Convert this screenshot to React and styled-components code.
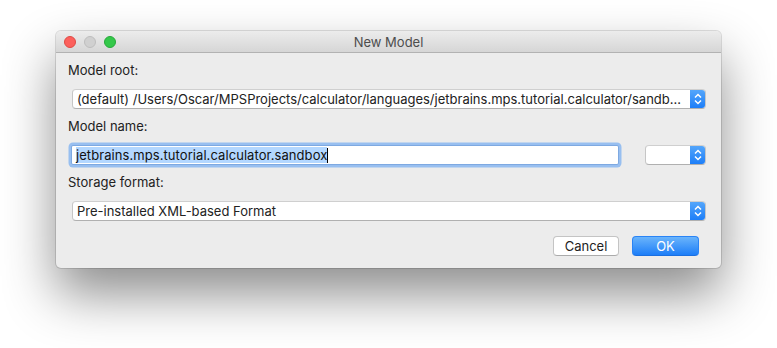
import React from "react";
import styled, { createGlobalStyle } from "styled-components";

const GlobalStyle = createGlobalStyle`
  html, body {
    margin: 0;
    padding: 0;
    background: #ffffff;
  }
  body {
    font-family: "Inter", "Liberation Sans", sans-serif;
    font-size: 13px;
    color: #222222;
  }
`;

const Page = styled.div`
  width: 777px;
  height: 348px;
  padding: 31px 56px 0;
  box-sizing: border-box;
  overflow: hidden;
`;

const Window = styled.div`
  width: 665px;
  height: 237px;
  border-radius: 5px;
  background: #ececec;
  box-shadow: 0 0 0 1px rgba(0, 0, 0, 0.12), 0 26px 52px rgba(0, 0, 0, 0.45);
  display: flex;
  flex-direction: column;
  overflow: hidden;
`;

const TitleBar = styled.div`
  height: 21px;
  flex-shrink: 0;
  display: flex;
  align-items: center;
  padding: 0 8px;
  background: linear-gradient(#ececec, #d6d6d6);
  border-bottom: 1px solid #b2b2b2;
`;

const Lights = styled.div`
  display: flex;
  gap: 8px;
`;

const Light = styled.span`
  width: 12px;
  height: 12px;
  border-radius: 50%;
  box-sizing: border-box;
  background: ${(p) => p.$fill};
  border: 0.5px solid ${(p) => p.$edge};
`;

const Title = styled.div`
  flex: 1;
  text-align: center;
  margin-right: 52px;
  color: #4d4d4d;
  font-size: 13px;
`;

const Body = styled.div`
  flex: 1;
  display: flex;
  flex-direction: column;
  padding: 9px 15px 12px 12px;
`;

const Label = styled.div`
  height: 16px;
  line-height: 16px;
  color: #222;
`;

const Row = styled.div`
  display: flex;
  align-items: center;
  gap: 26px;
  margin: 11px 0 9px 4px;
`;

const Combo = styled.div`
  flex: ${(p) => (p.$width ? "none" : "1")};
  width: ${(p) => (p.$width ? `${p.$width}px` : "auto")};
  min-width: 0;
  height: 20px;
  display: flex;
  box-sizing: border-box;
  border: 1px solid #c6c6c6;
  border-top-color: #cfcfcf;
  border-bottom-color: #b0b0b0;
  border-radius: 4px;
  background: #fff;
  overflow: hidden;
`;

const ComboText = styled.div`
  flex: 1;
  min-width: 0;
  padding-left: 4px;
  line-height: 18px;
  white-space: nowrap;
  overflow: hidden;
  color: #222;
`;

const ComboArrow = styled.div`
  width: 16px;
  flex-shrink: 0;
  margin: -1px -1px -1px 0;
  background: linear-gradient(#57a8fb, #1a7cf8);
  display: flex;
  align-items: center;
  justify-content: center;
`;

const Field = styled.div`
  flex: 1;
  height: 20px;
  box-sizing: border-box;
  margin-left: -1px;
  background: #fff;
  border: 1px solid #7ea9e1;
  border-radius: 2px;
  box-shadow: 0 0 0 2.5px #98bff0;
  display: flex;
  align-items: center;
  padding-left: 4px;
`;

const Selected = styled.span`
  background: #b3d7ff;
  line-height: 16px;
  color: #111;
  letter-spacing: 0.07px;
`;

const Caret = styled.span`
  width: 1px;
  height: 15px;
  background: #000;
`;

const Buttons = styled.div`
  display: flex;
  justify-content: flex-end;
  gap: 13px;
  margin-top: 6px;
  padding-right: 7px;
`;

const Button = styled.div`
  width: ${(p) => p.$width}px;
  height: 20px;
  box-sizing: border-box;
  border-radius: 4px;
  display: flex;
  align-items: center;
  justify-content: center;
  color: ${(p) => (p.$primary ? "#ffffff" : "#222222")};
  background: ${(p) =>
    p.$primary ? "linear-gradient(#6ab4fb, #1d7ef8)" : "#ffffff"};
  border: 1px solid ${(p) => (p.$primary ? "#2a84f6" : "#c4c4c4")};
  border-bottom-color: ${(p) => (p.$primary ? "#1a6fe0" : "#ababab")};
`;

const Chevrons = () => (
  <svg width="16" height="18" viewBox="0 0 16 18">
    <path
      d="M5 7.5 L8 4.5 L11 7.5 M5 10.5 L8 13.5 L11 10.5"
      fill="none"
      stroke="#fff"
      strokeWidth="1.5"
    />
  </svg>
);

const Select = ({ children, width }) => (
  <Combo $width={width}>
    <ComboText>{children}</ComboText>
    <ComboArrow>
      <Chevrons />
    </ComboArrow>
  </Combo>
);

const App = () => (
  <Page>
    <GlobalStyle />
    <Window>
      <TitleBar>
        <Lights>
          <Light $fill="#fc605c" $edge="#de4a44" />
          <Light $fill="#d0d0d0" $edge="#bdbdbd" />
          <Light $fill="#34c84a" $edge="#27a93a" />
        </Lights>
        <Title>New Model</Title>
      </TitleBar>
      <Body>
        <Label>Model root:</Label>
        <Row>
          <Select>
            (default) /Users/Oscar/MPSProjects/calculator/languages/jetbrains.mps.tutorial.calculator/sandb...
          </Select>
        </Row>
        <Label>Model name:</Label>
        <Row>
          <Field>
            <Selected>jetbrains.mps.tutorial.calculator.sandbox</Selected>
            <Caret />
          </Field>
          <Select width={61} />
        </Row>
        <Label>Storage format:</Label>
        <Row>
          <Select>Pre-installed XML-based Format</Select>
        </Row>
        <Buttons>
          <Button $width={66}>Cancel</Button>
          <Button $width={67} $primary>
            OK
          </Button>
        </Buttons>
      </Body>
    </Window>
  </Page>
);

export default App;
